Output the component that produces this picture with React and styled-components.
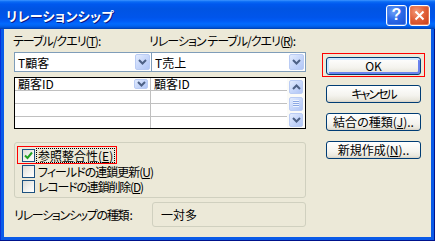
import styled, { createGlobalStyle } from 'styled-components'

const GlobalStyle = createGlobalStyle`
  html, body {
    margin: 0;
    padding: 0;
    background: #ECE9D8;
  }
  body {
    font-family: "Noto Sans CJK JP", sans-serif;
    font-size: 12px;
    font-feature-settings: "palt";
    color: #000000;
  }
  * {
    box-sizing: border-box;
  }
`

const Window = styled.div`
  width: 435px;
  height: 241px;
  display: flex;
  flex-direction: column;
`

const TitleBar = styled.div`
  height: 29px;
  flex: 0 0 auto;
  display: flex;
  align-items: center;
  justify-content: space-between;
  padding: 1px 5px 0 6px;
  background: linear-gradient(180deg,
    #3D95FF 0%, #0A6BF5 6%, #0058EE 14%, #0054E3 30%,
    #0055EB 60%, #005BF5 72%, #026AFE 82%, #0062EF 90%,
    #0052D6 95%, #0040AB 100%);
`

const Title = styled.span`
  color: #FFFFFF;
  font-weight: 700;
  font-size: 13px;
  letter-spacing: 0.3px;
  text-shadow: 1px 1px 0 #0A1883;
`

const TitleButtons = styled.div`
  display: flex;
  gap: 2px;
`

const CaptionButton = styled.div`
  width: 21px;
  height: 21px;
  border: 1px solid #FFFFFF;
  border-radius: 3px;
  display: flex;
  align-items: center;
  justify-content: center;
  color: #FFFFFF;
  font-family: "Liberation Sans", sans-serif;
  font-weight: 700;
  font-size: 16px;
  background: ${p => p.$close
    ? 'radial-gradient(circle at 35% 30%, #F39A7A 0%, #E2613A 45%, #C43C16 100%)'
    : 'radial-gradient(circle at 35% 30%, #6EA2F8 0%, #2C69E8 45%, #1A4FCF 100%)'};
  box-shadow: inset 0 0 0 1px ${p => p.$close ? '#E77A56' : '#4B86EE'};
`

const Frame = styled.div`
  flex: 1;
  display: flex;
  padding: 0 4px 4px 4px;
  background: #0A5BE8;
  box-shadow: inset -1px -1px 0 #00138C, inset 1px 0 0 #0831D9;
`

const Body = styled.div`
  flex: 1;
  display: flex;
  background: #ECE9D8;
  padding: 4px 0 0 10px;
`

const LeftCol = styled.div`
  width: 292px;
  display: flex;
  flex-direction: column;
`

const LabelRow = styled.div`
  height: 19px;
  display: flex;
  line-height: 16px;
  margin-left: -1px;
  white-space: nowrap;
`

// kana in the original bitmap font are much narrower than in Noto
const Label = styled.span`
  width: ${p => p.$width || 'auto'};
  letter-spacing: ${p => p.$tight || '-1px'};
  white-space: nowrap;
`

const ComboRow = styled.div`
  height: 20px;
  display: flex;
`

const Combo = styled.div`
  width: ${p => p.$width};
  margin-left: ${p => p.$overlap ? '-1px' : '0'};
  height: 20px;
  border: 1px solid #7F9DB9;
  background: #FFFFFF;
  display: flex;
  align-items: center;
  justify-content: space-between;
  padding: 0 1px 0 3px;
`

const DropButton = styled.div`
  width: ${p => p.$small ? '14px' : '15px'};
  height: ${p => p.$small ? '10px' : '16px'};
  border-radius: 2px;
  border: 1px solid #BACCF4;
  background: linear-gradient(135deg, #E3ECFE 0%, #C7D7FA 50%, #B1C6F6 100%);
  display: flex;
  align-items: center;
  justify-content: center;
`

const Chevron = ({ up }) => (
  <svg width="9" height="6" viewBox="0 0 9 6">
    <path
      d={up ? 'M1 5 L4.5 1.5 L8 5' : 'M1 1 L4.5 4.5 L8 1'}
      fill="none"
      stroke="#4D6185"
      strokeWidth="2"
    />
  </svg>
)

const Grid = styled.div`
  margin-top: 5px;
  height: 52px;
  border: 1px solid #000000;
  display: flex;
  background: #FFFFFF;
`

const GridColumn = styled.div`
  width: ${p => p.$width};
  display: flex;
  flex-direction: column;
  border-right: ${p => p.$divider ? '1px solid #C0C0C0' : 'none'};
`

const GridCell = styled.div`
  height: ${p => p.$last ? '11px' : '13px'};
  border-bottom: ${p => p.$last ? 'none' : '1px solid #C0C0C0'};
  display: flex;
  align-items: center;
  justify-content: space-between;
  padding: 0 2px 0 3px;
  line-height: 12px;
`

const ScrollBar = styled.div`
  width: 18px;
  display: flex;
  flex-direction: column;
  justify-content: space-between;
  padding: 2px 2px 1px 2px;
  background: #FBFBF8;
`

const ScrollButton = styled.div`
  height: 14px;
  border-radius: 2px;
  border: 1px solid #BACCF4;
  background: linear-gradient(135deg, #E3ECFE 0%, #C7D7FA 50%, #B1C6F6 100%);
  display: flex;
  align-items: center;
  justify-content: center;
`

const Grip = styled.div`
  width: 6px;
  height: 7px;
  background: repeating-linear-gradient(180deg, #EEF4FE 0, #EEF4FE 1px, #8CA8E4 1px, #8CA8E4 2px);
`

const GroupBox = styled.div`
  margin-top: 13px;
  height: 56px;
  border: 1px solid #D0D0BF;
  border-radius: 3px;
  padding: 3px 0 0 2px;
  display: flex;
  flex-direction: column;
`

const CheckRow = styled.div`
  height: ${p => p.$height};
  display: inline-flex;
  align-self: flex-start;
  align-items: center;
  gap: 2px;
  padding: 0 2px 0 ${p => p.$focused ? '4px' : '5px'};
  border: ${p => p.$focused ? '1px solid #FF0000' : 'none'};
  line-height: 13px;
`

const CheckBox = styled.div`
  width: 13px;
  height: 13px;
  flex: 0 0 auto;
  border: 1px solid #1C5180;
  background: linear-gradient(135deg, #DCDCD7 0%, #F4F4F1 60%, #FFFFFF 100%);
  display: flex;
  align-items: center;
  justify-content: center;
`

const CheckLabel = styled.span`
  padding: 0 1px;
  white-space: nowrap;
  letter-spacing: ${p => p.$tight || '0'};
  outline: ${p => p.$focused ? '1px dotted #000000' : 'none'};
`

const TypeRow = styled.div`
  margin-top: 4px;
  height: 25px;
  display: flex;
  align-items: center;
  justify-content: space-between;
`

const TypeBox = styled.div`
  width: 154px;
  height: 25px;
  border: 1px solid #D0D0BF;
  border-radius: 3px;
  display: flex;
  align-items: center;
  padding-left: 8px;
`

const RightCol = styled.div`
  width: 103px;
  margin-left: 16px;
  padding-top: 20px;
  display: flex;
  flex-direction: column;
  gap: 10px;
`

const FocusFrame = styled.div`
  border: 1px solid #FF0000;
  padding: 3px 3px 1px 3px;
  margin-bottom: -2px;
`

const Button = styled.div`
  width: 95px;
  height: 18px;
  margin-left: ${p => p.$inFrame ? '0' : '4px'};
  border: 1px solid #003C74;
  border-radius: 3px;
  background: linear-gradient(180deg, #FFFFFF 0%, #F4F3EE 60%, #E8E6DC 88%, #D6D0C5 100%);
  box-shadow: ${p => p.$default
    ? 'inset 1px 1px 0 1px #CEE7FF, inset -1px -1px 0 1px #6982EE'
    : 'none'};
  display: flex;
  align-items: center;
  justify-content: center;
  line-height: 12px;
  letter-spacing: ${p => p.$tight || '0'};
  white-space: nowrap;
`

const CheckMark = () => (
  <svg width="9" height="9" viewBox="0 0 9 9">
    <path d="M1 4.5 L3.5 7 L8 1.5" fill="none" stroke="#21A121" strokeWidth="2" />
  </svg>
)

const CloseGlyph = () => (
  <svg width="11" height="11" viewBox="0 0 11 11">
    <path d="M1.5 1.5 L9.5 9.5 M9.5 1.5 L1.5 9.5" stroke="#FFFFFF" strokeWidth="2" />
  </svg>
)

const checks = [
  { label: '参照整合性', key: 'E', checked: true, focused: true, height: '18px' },
  { label: 'フィールドの連鎖更新', key: 'U', tight: '-1px', height: '15px' },
  { label: 'レコードの連鎖削除', key: 'D', tight: '-1.2px', height: '15px' },
]

const buttons = [
  { label: 'キャンセル', tight: '-2px' },
  { label: '結合の種類', key: 'J' },
  { label: '新規作成', key: 'N' },
]

const App = () => (
  <>
    <GlobalStyle />
    <Window>
      <TitleBar>
        <Title>リレーションシップ</Title>
        <TitleButtons>
          <CaptionButton>?</CaptionButton>
          <CaptionButton $close><CloseGlyph /></CaptionButton>
        </TitleButtons>
      </TitleBar>
      <Frame>
        <Body>
          <LeftCol>
            <LabelRow>
              <Label $width="136px">テーブル/クエリ(<u>T</u>):</Label>
              <Label>リレーション テーブル/クエリ(<u>R</u>):</Label>
            </LabelRow>
            <ComboRow>
              <Combo $width="138px">
                T顧客
                <DropButton><Chevron /></DropButton>
              </Combo>
              <Combo $width="155px" $overlap>
                T売上
                <DropButton><Chevron /></DropButton>
              </Combo>
            </ComboRow>
            <Grid>
              <GridColumn $width="136px" $divider>
                <GridCell>
                  顧客ID
                  <DropButton $small><Chevron /></DropButton>
                </GridCell>
                <GridCell />
                <GridCell />
                <GridCell $last />
              </GridColumn>
              <GridColumn $width="136px">
                <GridCell>顧客ID</GridCell>
                <GridCell />
                <GridCell />
                <GridCell $last />
              </GridColumn>
              <ScrollBar>
                <ScrollButton><Chevron up /></ScrollButton>
                <ScrollButton><Grip /></ScrollButton>
                <ScrollButton><Chevron /></ScrollButton>
              </ScrollBar>
            </Grid>
            <GroupBox>
              {checks.map(c => (
                <CheckRow key={c.key} $focused={c.focused} $height={c.height}>
                  <CheckBox>{c.checked && <CheckMark />}</CheckBox>
                  <CheckLabel $focused={c.focused} $tight={c.tight}>
                    {c.label}(<u>{c.key}</u>)
                  </CheckLabel>
                </CheckRow>
              ))}
            </GroupBox>
            <TypeRow>
              <Label $tight="-1.3px">リレーションシップの種類 :</Label>
              <TypeBox>一対多</TypeBox>
            </TypeRow>
          </LeftCol>
          <RightCol>
            <FocusFrame>
              <Button $default $inFrame>OK</Button>
            </FocusFrame>
            {buttons.map(b => (
              <Button key={b.label} $tight={b.tight}>
                {b.label}
                {b.key && <>(<u>{b.key}</u>)..</>}
              </Button>
            ))}
          </RightCol>
        </Body>
      </Frame>
    </Window>
  </>
)

export default App
